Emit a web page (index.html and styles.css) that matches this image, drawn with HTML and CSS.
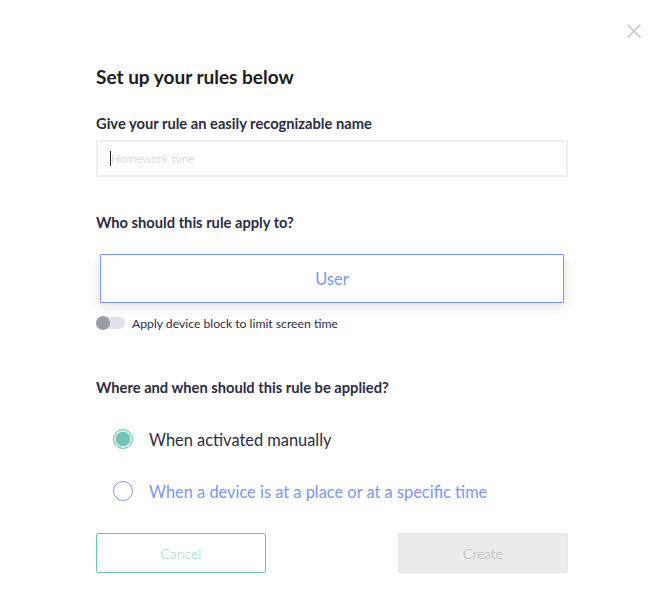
FILE: index.html
```html
<!DOCTYPE html>
<html>
<head>
<meta charset="utf-8">
<link rel="stylesheet" href="styles.css">
</head>
<body>
<button class="close" aria-label="Close">
  <svg width="14" height="14" viewBox="0 0 14 14"><path d="M1 1L13 13M13 1L1 13" stroke="#c3c6d6" stroke-width="1.6" fill="none" stroke-linecap="round"/></svg>
</button>
<main class="dialog">
  <h1 class="title">Set up your rules below</h1>
  <label class="label label-name">Give your rule an easily recognizable name</label>
  <div class="input"><span class="caret"></span><span class="placeholder">Homework time</span></div>
  <div class="label label-who">Who should this rule apply to?</div>
  <div class="user-box">User</div>
  <div class="toggle-row">
    <span class="toggle"><span class="knob"></span></span>
    <span class="toggle-text">Apply device block to limit screen time</span>
  </div>
  <div class="label label-where">Where and when should this rule be applied?</div>
  <div class="radios">
    <div class="radio-row">
      <span class="radio checked"></span>
      <span class="radio-text">When activated manually</span>
    </div>
    <div class="radio-row">
      <span class="radio"></span>
      <span class="radio-text blue">When a device is at a place or at a specific time</span>
    </div>
  </div>
  <div class="buttons">
    <button class="btn cancel">Cancel</button>
    <button class="btn create">Create</button>
  </div>
</main>
</body>
</html>
```
FILE: styles.css
```css
* { box-sizing: border-box; }
html, body { margin: 0; padding: 0; background: #fff; }
body {
  width: 666px;
  height: 611px;
  position: relative;
  font-family: "Lato", "Open Sans", sans-serif;
  color: #2b2d42;
}
.close {
  position: absolute;
  top: 24px;
  left: 627px;
  width: 14px;
  height: 14px;
  padding: 0;
  border: 0;
  background: none;
  display: flex;
}
.dialog {
  width: 472px;
  margin-left: 96px;
  padding-top: 66px;
  display: flex;
  flex-direction: column;
}
.title {
  margin: 0;
  font-size: 19px;
  line-height: 22px;
  font-weight: 700;
  color: #1e1b1b;
}
.label {
  display: block;
  font-size: 14.7px;
  line-height: 18px;
  font-weight: 700;
  color: #2b2d42;
}
.label-name { margin-top: 26px; }
.input {
  margin-top: 8px;
  height: 37px;
  border: 2px solid #eeeef3;
  display: flex;
  align-items: center;
  padding-left: 12px;
}
.caret {
  width: 1px;
  height: 15px;
  background: #222;
}
.placeholder {
  font-size: 12px;
  color: #c3c6d6;
  font-weight: 300;
}
.label-who { margin-top: 36px; }
.user-box {
  margin: 23px 4px 0;
  height: 49px;
  border: 1px solid #7b96f7;
  border-radius: 1px;
  box-shadow: 0 4px 12px rgba(40, 45, 80, 0.14);
  display: flex;
  align-items: center;
  justify-content: center;
  font-size: 16.4px;
  color: #7b96f7;
}
.toggle-row {
  margin-top: 13px;
  display: flex;
  align-items: center;
  gap: 7px;
  height: 14px;
}
.toggle {
  width: 29px;
  height: 12px;
  border-radius: 6px;
  background: #dfe1ee;
  position: relative;
  display: flex;
  align-items: center;
}
.knob {
  width: 14px;
  height: 14px;
  border-radius: 50%;
  background: #9a9da8;
}
.toggle-text {
  font-size: 12.2px;
  color: #2b2d42;
}
.label-where { margin-top: 48px; }
.radios {
  margin-top: 32px;
  padding-left: 17px;
  display: flex;
  flex-direction: column;
  gap: 30px;
}
.radio-row {
  display: flex;
  align-items: center;
  gap: 16px;
  height: 22px;
}
.radio {
  width: 20px;
  height: 20px;
  border-radius: 50%;
  border: 1.5px solid #7b96f7;
  background: #fff;
  flex: none;
}
.radio.checked {
  border-color: #6fc6b6;
  background: #6fc6b6;
  box-shadow: inset 0 0 0 1.5px #fff;
}
.radio-text {
  font-size: 16.4px;
  color: #2b2d42;
}
.radio-text.blue { color: #7b96f7; }
.buttons {
  margin-top: 31px;
  display: flex;
  justify-content: space-between;
}
.btn {
  width: 170px;
  height: 40px;
  font-family: inherit;
  font-size: 14px;
  font-weight: 300;
  border-radius: 2px;
}
.cancel {
  background: #fff;
  border: 1px solid #6cc6b6;
  color: #8cd6c8;
}
.create {
  background: #ebebeb;
  border: 1px solid #e6e6e6;
  color: #b3b3b3;
}
```
